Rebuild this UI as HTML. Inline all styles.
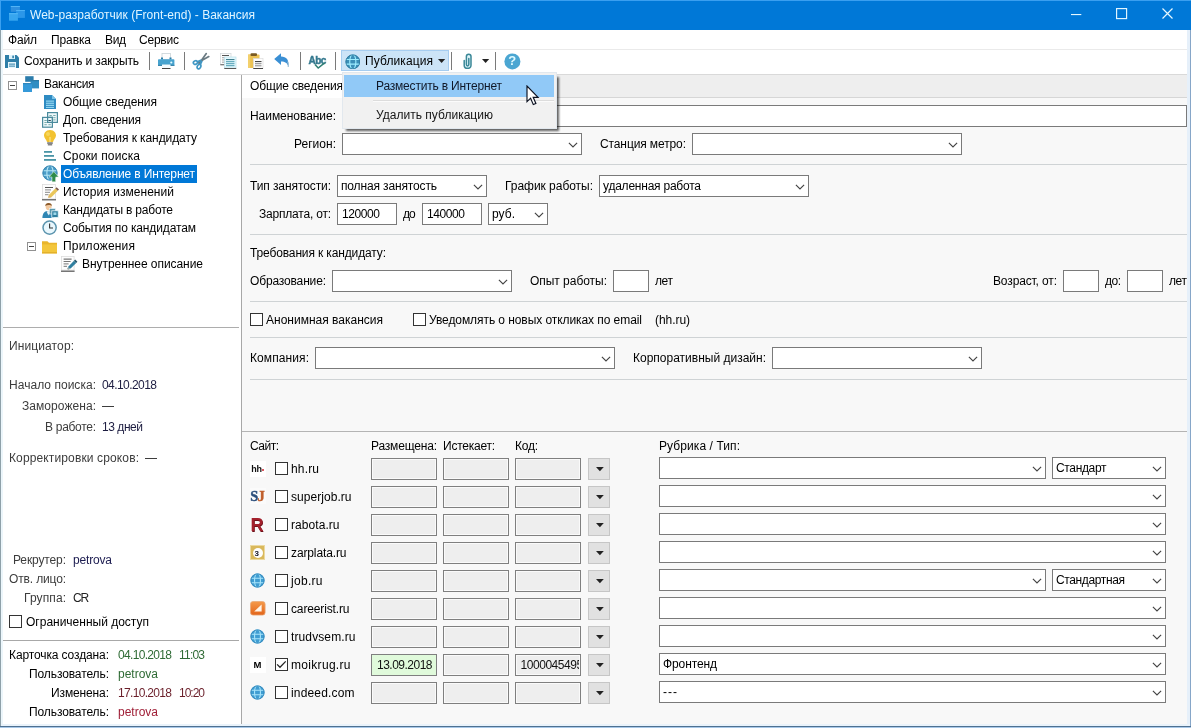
<!DOCTYPE html>
<html><head><meta charset="utf-8"><title>Вакансия</title>
<style>
html,body{margin:0;padding:0;}
body{width:1191px;height:728px;overflow:hidden;background:#fff;font-family:"Liberation Sans", sans-serif;font-size:12px;position:relative;}
#w{position:absolute;left:0;top:0;width:1191px;height:728px;overflow:hidden;opacity:0.9999;}
#w div,#w span.t,#w svg{position:absolute;box-sizing:border-box;}
.t{white-space:nowrap;line-height:16px;height:16px;}
.in{background:#fff;border:1px solid #7a7a7a;}
.dis{background:#eeeeee;border:1px solid #7f7f7f;box-shadow:inset 0 0 0 1px #fafafa;}
.cb{background:#fff;border:1px solid #333;}
.hl{background:#dcdcdc;height:1px;}
</style></head><body><div id="w">
<div class="" style="left:0px;top:0px;width:1191px;height:728px;background:#fff;"></div>
<div class="" style="left:0px;top:0px;width:1191px;height:30px;background:#0078d7;border-top:1px solid #3a9ff0;"></div>
<span id="t0" class="t" style="left:30px;top:7.0px;font-size:12px;color:#e0f5ff;letter-spacing:0.021px;">Web-разработчик (Front-end) - Вакансия</span>
<svg style="left:1071px;top:14px" width="12" height="2" viewBox="0 0 12 2"><rect x="0" y="0" width="10.3" height="1.1" fill="#e6f8ff"/></svg>
<svg style="left:1115.5px;top:8.4px" width="12" height="12" viewBox="0 0 12 12"><rect x="0.6" y="0.6" width="10" height="10" fill="none" stroke="#e6f8ff" stroke-width="1.15"/></svg>
<svg style="left:1161.6px;top:8.4px" width="12" height="12" viewBox="0 0 12 12"><path d="M0.5 0.5 L10.5 10.5 M10.5 0.5 L0.5 10.5" stroke="#e6f8ff" stroke-width="1.2" fill="none"/></svg>
<div class="" style="left:1px;top:30px;width:1189px;height:20px;background:#fff;"></div>
<span id="t1" class="t" style="left:8px;top:32.0px;font-size:12px;color:#000;letter-spacing:-0.172px;">Файл</span>
<span id="t2" class="t" style="left:51px;top:32.0px;font-size:12px;color:#000;letter-spacing:-0.109px;">Правка</span>
<span id="t3" class="t" style="left:105px;top:32.0px;font-size:12px;color:#000;letter-spacing:-0.359px;">Вид</span>
<span id="t4" class="t" style="left:139px;top:32.0px;font-size:12px;color:#000;letter-spacing:-0.219px;">Сервис</span>
<div class="" style="left:1px;top:49px;width:1189px;height:1px;background:#eaeaea;"></div>
<div class="" style="left:1px;top:50px;width:1189px;height:24px;background:#fff;"></div>
<div class="" style="left:1px;top:74px;width:1189px;height:1px;background:#d9d9d9;"></div>
<span id="t5" class="t" style="left:24px;top:53.0px;font-size:12px;color:#000;letter-spacing:-0.138px;">Сохранить и закрыть</span>
<div class="" style="left:149px;top:52px;width:1px;height:18px;background:#7a7a7a;"></div>
<div class="" style="left:184px;top:52px;width:1px;height:18px;background:#7a7a7a;"></div>
<div class="" style="left:300px;top:52px;width:1px;height:18px;background:#7a7a7a;"></div>
<div class="" style="left:335px;top:52px;width:1px;height:18px;background:#7a7a7a;"></div>
<div class="" style="left:451px;top:52px;width:1px;height:18px;background:#7a7a7a;"></div>
<div class="" style="left:495px;top:52px;width:1px;height:18px;background:#7a7a7a;"></div>
<div class="" style="left:341px;top:50px;width:108px;height:21px;background:#cce4f7;border:1px solid #a6cdf0;"></div>
<span id="t6" class="t" style="left:365px;top:53.0px;font-size:12px;color:#000;letter-spacing:0.104px;">Публикация</span>
<svg style="left:438px;top:59px" width="8" height="5" viewBox="0 0 8 5"><path d="M0 0 L7.2 0 L3.6 4.1 Z" fill="#222"/></svg>
<svg style="left:482px;top:59px" width="8" height="5" viewBox="0 0 8 5"><path d="M0 0 L7.2 0 L3.6 4.1 Z" fill="#222"/></svg>
<div class="" style="left:1px;top:75px;width:240px;height:652px;background:#fff;"></div>
<div class="" style="left:241px;top:75px;width:1px;height:652px;background:#a8a8a8;"></div>
<div class="" style="left:8px;top:81px;width:9px;height:9px;background:#fff;border:1px solid #919191;"></div>
<div class="" style="left:10px;top:85px;width:5px;height:1px;background:#444;"></div>
<div class="" style="left:27px;top:242px;width:9px;height:9px;background:#fff;border:1px solid #919191;"></div>
<div class="" style="left:29px;top:246px;width:5px;height:1px;background:#444;"></div>
<span id="t7" class="t" style="left:44px;top:76.0px;font-size:12px;color:#000;letter-spacing:-0.300px;">Вакансия</span>
<div class="" style="left:61px;top:165px;width:136px;height:18px;background:#0078d7;"></div>
<span id="t8" class="t" style="left:63px;top:94.0px;font-size:12px;color:#000;letter-spacing:-0.073px;">Общие сведения</span>
<span id="t9" class="t" style="left:63px;top:112.0px;font-size:12px;color:#000;letter-spacing:-0.189px;">Доп. сведения</span>
<span id="t10" class="t" style="left:63px;top:130.0px;font-size:12px;color:#000;letter-spacing:-0.078px;">Требования к кандидату</span>
<span id="t11" class="t" style="left:63px;top:148.0px;font-size:12px;color:#000;letter-spacing:0.148px;">Сроки поиска</span>
<span id="t12" class="t" style="left:63px;top:166.0px;font-size:12px;color:#fff;letter-spacing:-0.150px;">Объявление в Интернет</span>
<span id="t13" class="t" style="left:63px;top:184.0px;font-size:12px;color:#000;letter-spacing:0.041px;">История изменений</span>
<span id="t14" class="t" style="left:63px;top:202.0px;font-size:12px;color:#000;letter-spacing:-0.191px;">Кандидаты в работе</span>
<span id="t15" class="t" style="left:63px;top:220.0px;font-size:12px;color:#000;letter-spacing:-0.130px;">События по кандидатам</span>
<span id="t16" class="t" style="left:63px;top:238.0px;font-size:12px;color:#000;letter-spacing:0.198px;">Приложения</span>
<span id="t17" class="t" style="left:82px;top:256.0px;font-size:12px;color:#000;letter-spacing:-0.054px;">Внутреннее описание</span>
<div class="" style="left:2px;top:327px;width:237px;height:1px;background:#adadad;"></div>
<div class="" style="left:2px;top:639.5px;width:237px;height:1px;background:#a8a8a8;"></div>
<span id="t18" class="t" style="left:9px;top:338.0px;font-size:12px;color:#3c3c3c;letter-spacing:0.113px;">Инициатор:</span>
<span id="t19" class="t" style="left:9px;top:376.5px;font-size:12px;color:#3c3c3c;letter-spacing:0.035px;">Начало поиска:</span>
<span id="t20" class="t" style="left:102px;top:376.5px;font-size:12px;color:#1c1c40;letter-spacing:-0.562px;">04.10.2018</span>
<span id="t21" class="t" style="left:22px;top:397.5px;font-size:12px;color:#3c3c3c;letter-spacing:0.059px;">Заморожена:</span>
<span id="t22" class="t" style="left:102px;top:397.5px;font-size:12px;color:#222;letter-spacing:0.000px;">—</span>
<span id="t23" class="t" style="left:45px;top:418.5px;font-size:12px;color:#3c3c3c;letter-spacing:-0.293px;">В работе:</span>
<span id="t24" class="t" style="left:102px;top:418.5px;font-size:12px;color:#1c1c40;letter-spacing:-0.448px;">13 дней</span>
<span id="t25" class="t" style="left:9px;top:450.0px;font-size:12px;color:#3c3c3c;letter-spacing:0.130px;">Корректировки сроков:</span>
<span id="t26" class="t" style="left:145px;top:450.0px;font-size:12px;color:#222;letter-spacing:0.000px;">—</span>
<span id="t27" class="t" style="left:13px;top:552.0px;font-size:12px;color:#3c3c3c;letter-spacing:-0.123px;">Рекрутер:</span>
<span id="t28" class="t" style="left:73px;top:552.0px;font-size:12px;color:#1c1c50;letter-spacing:-0.172px;">petrova</span>
<span id="t29" class="t" style="left:9px;top:570.5px;font-size:12px;color:#3c3c3c;letter-spacing:-0.148px;">Отв. лицо:</span>
<span id="t30" class="t" style="left:24px;top:589.5px;font-size:12px;color:#3c3c3c;letter-spacing:0.104px;">Группа:</span>
<span id="t31" class="t" style="left:73px;top:589.5px;font-size:12px;color:#222;letter-spacing:-1.200px;">CR</span>
<div class="cb" style="left:9px;top:615px;width:13px;height:13px;"></div>
<span id="t32" class="t" style="left:26px;top:614.0px;font-size:12px;color:#000;letter-spacing:-0.003px;">Ограниченный доступ</span>
<span id="t33" class="t" style="left:9px;top:646.5px;font-size:12px;color:#000;letter-spacing:-0.115px;">Карточка создана:</span>
<span id="t34" class="t" style="left:118px;top:646.5px;font-size:12px;color:#2f6b35;letter-spacing:-0.674px;">04.10.2018</span>
<span id="t35" class="t" style="left:179px;top:646.5px;font-size:12px;color:#2f6b35;letter-spacing:-0.785px;">11:03</span>
<span id="t36" class="t" style="left:29px;top:665.5px;font-size:12px;color:#000;letter-spacing:-0.102px;">Пользователь:</span>
<span id="t37" class="t" style="left:118px;top:665.5px;font-size:12px;color:#2f6b35;letter-spacing:-0.005px;">petrova</span>
<span id="t38" class="t" style="left:51px;top:684.5px;font-size:12px;color:#000;letter-spacing:-0.125px;">Изменена:</span>
<span id="t39" class="t" style="left:118px;top:684.5px;font-size:12px;color:#6b1f2a;letter-spacing:-0.674px;">17.10.2018</span>
<span id="t40" class="t" style="left:179px;top:684.5px;font-size:12px;color:#6b1f2a;letter-spacing:-1.008px;">10:20</span>
<span id="t41" class="t" style="left:29px;top:703.5px;font-size:12px;color:#000;letter-spacing:-0.102px;">Пользователь:</span>
<span id="t42" class="t" style="left:118px;top:703.5px;font-size:12px;color:#a02038;letter-spacing:-0.005px;">petrova</span>
<div class="" style="left:242px;top:75px;width:945px;height:651px;background:#f8f8f8;"></div>
<div class="" style="left:242px;top:75px;width:945px;height:23px;background:#eeeeee;border-bottom:1px solid #d6d6d6;"></div>
<div class="" style="left:242px;top:75px;width:108px;height:23px;background:#fff;"></div>
<span id="t43" class="t" style="left:250px;top:78.0px;font-size:12px;color:#000;letter-spacing:-0.150px;">Общие сведения</span>
<span id="t44" class="t" style="left:250px;top:108.0px;font-size:12px;color:#000;letter-spacing:-0.044px;">Наименование:</span>
<div class="in" style="left:342px;top:105px;width:845px;height:22px;"></div>
<span id="t45" class="t" style="left:294px;top:136.0px;font-size:12px;color:#000;letter-spacing:0.021px;">Регион:</span>
<div class="in" style="left:342px;top:133px;width:240px;height:22px;"></div>
<svg style="left:568px;top:141.8px" width="10" height="6" viewBox="0 0 10 6"><path d="M0.9 0.8 L5 4.9 L9.1 0.8" fill="none" stroke="#444" stroke-width="1.15"/></svg>
<span id="t46" class="t" style="left:600px;top:136.0px;font-size:12px;color:#000;letter-spacing:-0.112px;">Станция метро:</span>
<div class="in" style="left:692px;top:133px;width:270px;height:22px;"></div>
<svg style="left:948px;top:141.8px" width="10" height="6" viewBox="0 0 10 6"><path d="M0.9 0.8 L5 4.9 L9.1 0.8" fill="none" stroke="#444" stroke-width="1.15"/></svg>
<div class="" style="left:250px;top:164px;width:937px;height:1px;background:#cfd3d5;"></div>
<span id="t47" class="t" style="left:250px;top:178.0px;font-size:12px;color:#000;letter-spacing:-0.094px;">Тип занятости:</span>
<div class="in" style="left:337px;top:175px;width:150px;height:22px;"></div>
<svg style="left:473px;top:183.8px" width="10" height="6" viewBox="0 0 10 6"><path d="M0.9 0.8 L5 4.9 L9.1 0.8" fill="none" stroke="#444" stroke-width="1.15"/></svg>
<span id="t48" class="t" style="left:341px;top:178.0px;font-size:12px;color:#000;letter-spacing:-0.143px;">полная занятость</span>
<span id="t49" class="t" style="left:505px;top:178.0px;font-size:12px;color:#000;letter-spacing:-0.032px;">График работы:</span>
<div class="in" style="left:599px;top:175px;width:210px;height:22px;"></div>
<svg style="left:795px;top:183.8px" width="10" height="6" viewBox="0 0 10 6"><path d="M0.9 0.8 L5 4.9 L9.1 0.8" fill="none" stroke="#444" stroke-width="1.15"/></svg>
<span id="t50" class="t" style="left:603px;top:178.0px;font-size:12px;color:#000;letter-spacing:-0.226px;">удаленная работа</span>
<span id="t51" class="t" style="left:259px;top:206.0px;font-size:12px;color:#000;letter-spacing:-0.204px;">Зарплата, от:</span>
<div class="in" style="left:337px;top:203px;width:60px;height:22px;"></div>
<span id="t52" class="t" style="left:342px;top:206.0px;font-size:12px;color:#000;letter-spacing:-0.409px;">120000</span>
<span id="t53" class="t" style="left:403px;top:206.0px;font-size:12px;color:#000;letter-spacing:-0.988px;">до</span>
<div class="in" style="left:422px;top:203px;width:60px;height:22px;"></div>
<span id="t54" class="t" style="left:427px;top:206.0px;font-size:12px;color:#000;letter-spacing:-0.409px;">140000</span>
<div class="in" style="left:488px;top:203px;width:60px;height:22px;"></div>
<svg style="left:534px;top:211.8px" width="10" height="6" viewBox="0 0 10 6"><path d="M0.9 0.8 L5 4.9 L9.1 0.8" fill="none" stroke="#444" stroke-width="1.15"/></svg>
<span id="t55" class="t" style="left:492px;top:206.0px;font-size:12px;color:#000;letter-spacing:0.036px;">руб.</span>
<div class="" style="left:250px;top:234px;width:937px;height:1px;background:#cfd3d5;"></div>
<span id="t56" class="t" style="left:250px;top:245.0px;font-size:12px;color:#000;letter-spacing:-0.136px;">Требования к кандидату:</span>
<span id="t57" class="t" style="left:250px;top:273.0px;font-size:12px;color:#000;letter-spacing:-0.156px;">Образование:</span>
<div class="in" style="left:332px;top:270px;width:180px;height:22px;"></div>
<svg style="left:498px;top:278.8px" width="10" height="6" viewBox="0 0 10 6"><path d="M0.9 0.8 L5 4.9 L9.1 0.8" fill="none" stroke="#444" stroke-width="1.15"/></svg>
<span id="t58" class="t" style="left:530px;top:273.0px;font-size:12px;color:#000;letter-spacing:-0.034px;">Опыт работы:</span>
<div class="in" style="left:613px;top:270px;width:36px;height:22px;"></div>
<span id="t59" class="t" style="left:655px;top:273.0px;font-size:12px;color:#000;letter-spacing:-0.391px;">лет</span>
<span id="t60" class="t" style="left:993px;top:273.0px;font-size:12px;color:#000;letter-spacing:-0.134px;">Возраст, от:</span>
<div class="in" style="left:1063px;top:270px;width:36px;height:22px;"></div>
<span id="t61" class="t" style="left:1105px;top:273.0px;font-size:12px;color:#000;letter-spacing:-0.508px;">до:</span>
<div class="in" style="left:1127px;top:270px;width:36px;height:22px;"></div>
<span id="t62" class="t" style="left:1169px;top:273.0px;font-size:12px;color:#000;letter-spacing:-0.391px;">лет</span>
<div class="" style="left:250px;top:301px;width:937px;height:1px;background:#cfd3d5;"></div>
<div class="cb" style="left:250px;top:313px;width:13px;height:13px;"></div>
<span id="t63" class="t" style="left:266px;top:312.0px;font-size:12px;color:#000;letter-spacing:0.003px;">Анонимная вакансия</span>
<div class="cb" style="left:413px;top:313px;width:13px;height:13px;"></div>
<span id="t64" class="t" style="left:429px;top:312.0px;font-size:12px;color:#000;letter-spacing:-0.070px;">Уведомлять о новых откликах по email</span>
<span id="t65" class="t" style="left:655px;top:312.0px;font-size:12px;color:#000;letter-spacing:-0.057px;">(hh.ru)</span>
<div class="" style="left:250px;top:337px;width:937px;height:1px;background:#cfd3d5;"></div>
<span id="t66" class="t" style="left:250px;top:350.0px;font-size:12px;color:#000;letter-spacing:0.094px;">Компания:</span>
<div class="in" style="left:315px;top:347px;width:300px;height:22px;"></div>
<svg style="left:601px;top:355.8px" width="10" height="6" viewBox="0 0 10 6"><path d="M0.9 0.8 L5 4.9 L9.1 0.8" fill="none" stroke="#444" stroke-width="1.15"/></svg>
<span id="t67" class="t" style="left:633px;top:350.0px;font-size:12px;color:#000;letter-spacing:-0.001px;">Корпоративный дизайн:</span>
<div class="in" style="left:772px;top:347px;width:210px;height:22px;"></div>
<svg style="left:968px;top:355.8px" width="10" height="6" viewBox="0 0 10 6"><path d="M0.9 0.8 L5 4.9 L9.1 0.8" fill="none" stroke="#444" stroke-width="1.15"/></svg>
<div class="" style="left:250px;top:379px;width:937px;height:1px;background:#cfd3d5;"></div>
<div class="" style="left:242px;top:431px;width:945px;height:1px;background:#b4b4b4;"></div>
<span id="t68" class="t" style="left:250px;top:438.0px;font-size:12px;color:#000;letter-spacing:-0.504px;">Сайт:</span>
<span id="t69" class="t" style="left:371px;top:438.0px;font-size:12px;color:#000;letter-spacing:-0.181px;">Размещена:</span>
<span id="t70" class="t" style="left:443px;top:438.0px;font-size:12px;color:#000;letter-spacing:-0.244px;">Истекает:</span>
<span id="t71" class="t" style="left:515px;top:438.0px;font-size:12px;color:#000;letter-spacing:-0.250px;">Код:</span>
<span id="t72" class="t" style="left:659px;top:438.0px;font-size:12px;color:#000;letter-spacing:0.083px;">Рубрика / Тип:</span>
<div class="cb" style="left:275px;top:462px;width:13px;height:13px;"></div>
<span id="t73" class="t" style="left:291px;top:461.0px;font-size:12px;color:#000;letter-spacing:0.160px;">hh.ru</span>
<div class="dis" style="left:371px;top:458px;width:66px;height:22px;"></div>
<div class="dis" style="left:443px;top:458px;width:66px;height:22px;"></div>
<div class="dis" style="left:515px;top:458px;width:66px;height:22px;"></div>
<div class="" style="left:588px;top:458px;width:22px;height:22px;background:#e1e1e1;border:1px solid #c6c6c6;"></div>
<svg style="left:595.5px;top:467px" width="8" height="5" viewBox="0 0 8 5"><path d="M0 0 L7.8 0 L3.9 4.3 Z" fill="#222"/></svg>
<div class="in" style="left:659px;top:457px;width:387px;height:22px;"></div>
<svg style="left:1032px;top:465.8px" width="10" height="6" viewBox="0 0 10 6"><path d="M0.9 0.8 L5 4.9 L9.1 0.8" fill="none" stroke="#444" stroke-width="1.15"/></svg>
<div class="in" style="left:1052px;top:457px;width:114px;height:22px;"></div>
<svg style="left:1152px;top:465.8px" width="10" height="6" viewBox="0 0 10 6"><path d="M0.9 0.8 L5 4.9 L9.1 0.8" fill="none" stroke="#444" stroke-width="1.15"/></svg>
<span id="t74" class="t" style="left:1056px;top:460.0px;font-size:12px;color:#000;letter-spacing:-0.346px;">Стандарт</span>
<div class="cb" style="left:275px;top:490px;width:13px;height:13px;"></div>
<span id="t75" class="t" style="left:291px;top:489.0px;font-size:12px;color:#000;letter-spacing:0.045px;">superjob.ru</span>
<div class="dis" style="left:371px;top:486px;width:66px;height:22px;"></div>
<div class="dis" style="left:443px;top:486px;width:66px;height:22px;"></div>
<div class="dis" style="left:515px;top:486px;width:66px;height:22px;"></div>
<div class="" style="left:588px;top:486px;width:22px;height:22px;background:#e1e1e1;border:1px solid #c6c6c6;"></div>
<svg style="left:595.5px;top:495px" width="8" height="5" viewBox="0 0 8 5"><path d="M0 0 L7.8 0 L3.9 4.3 Z" fill="#222"/></svg>
<div class="in" style="left:659px;top:485px;width:507px;height:22px;"></div>
<svg style="left:1152px;top:493.8px" width="10" height="6" viewBox="0 0 10 6"><path d="M0.9 0.8 L5 4.9 L9.1 0.8" fill="none" stroke="#444" stroke-width="1.15"/></svg>
<div class="cb" style="left:275px;top:518px;width:13px;height:13px;"></div>
<span id="t76" class="t" style="left:291px;top:517.0px;font-size:12px;color:#000;letter-spacing:0.059px;">rabota.ru</span>
<div class="dis" style="left:371px;top:514px;width:66px;height:22px;"></div>
<div class="dis" style="left:443px;top:514px;width:66px;height:22px;"></div>
<div class="dis" style="left:515px;top:514px;width:66px;height:22px;"></div>
<div class="" style="left:588px;top:514px;width:22px;height:22px;background:#e1e1e1;border:1px solid #c6c6c6;"></div>
<svg style="left:595.5px;top:523px" width="8" height="5" viewBox="0 0 8 5"><path d="M0 0 L7.8 0 L3.9 4.3 Z" fill="#222"/></svg>
<div class="in" style="left:659px;top:513px;width:507px;height:22px;"></div>
<svg style="left:1152px;top:521.8px" width="10" height="6" viewBox="0 0 10 6"><path d="M0.9 0.8 L5 4.9 L9.1 0.8" fill="none" stroke="#444" stroke-width="1.15"/></svg>
<div class="cb" style="left:275px;top:546px;width:13px;height:13px;"></div>
<span id="t77" class="t" style="left:291px;top:545.0px;font-size:12px;color:#000;letter-spacing:-0.120px;">zarplata.ru</span>
<div class="dis" style="left:371px;top:542px;width:66px;height:22px;"></div>
<div class="dis" style="left:443px;top:542px;width:66px;height:22px;"></div>
<div class="dis" style="left:515px;top:542px;width:66px;height:22px;"></div>
<div class="" style="left:588px;top:542px;width:22px;height:22px;background:#e1e1e1;border:1px solid #c6c6c6;"></div>
<svg style="left:595.5px;top:551px" width="8" height="5" viewBox="0 0 8 5"><path d="M0 0 L7.8 0 L3.9 4.3 Z" fill="#222"/></svg>
<div class="in" style="left:659px;top:541px;width:507px;height:22px;"></div>
<svg style="left:1152px;top:549.8px" width="10" height="6" viewBox="0 0 10 6"><path d="M0.9 0.8 L5 4.9 L9.1 0.8" fill="none" stroke="#444" stroke-width="1.15"/></svg>
<div class="cb" style="left:275px;top:574px;width:13px;height:13px;"></div>
<span id="t78" class="t" style="left:291px;top:573.0px;font-size:12px;color:#000;letter-spacing:0.294px;">job.ru</span>
<div class="dis" style="left:371px;top:570px;width:66px;height:22px;"></div>
<div class="dis" style="left:443px;top:570px;width:66px;height:22px;"></div>
<div class="dis" style="left:515px;top:570px;width:66px;height:22px;"></div>
<div class="" style="left:588px;top:570px;width:22px;height:22px;background:#e1e1e1;border:1px solid #c6c6c6;"></div>
<svg style="left:595.5px;top:579px" width="8" height="5" viewBox="0 0 8 5"><path d="M0 0 L7.8 0 L3.9 4.3 Z" fill="#222"/></svg>
<div class="in" style="left:659px;top:569px;width:387px;height:22px;"></div>
<svg style="left:1032px;top:577.8px" width="10" height="6" viewBox="0 0 10 6"><path d="M0.9 0.8 L5 4.9 L9.1 0.8" fill="none" stroke="#444" stroke-width="1.15"/></svg>
<div class="in" style="left:1052px;top:569px;width:114px;height:22px;"></div>
<svg style="left:1152px;top:577.8px" width="10" height="6" viewBox="0 0 10 6"><path d="M0.9 0.8 L5 4.9 L9.1 0.8" fill="none" stroke="#444" stroke-width="1.15"/></svg>
<span id="t79" class="t" style="left:1056px;top:572.0px;font-size:12px;color:#000;letter-spacing:-0.372px;">Стандартная</span>
<div class="cb" style="left:275px;top:602px;width:13px;height:13px;"></div>
<span id="t80" class="t" style="left:291px;top:601.0px;font-size:12px;color:#000;letter-spacing:-0.139px;">careerist.ru</span>
<div class="dis" style="left:371px;top:598px;width:66px;height:22px;"></div>
<div class="dis" style="left:443px;top:598px;width:66px;height:22px;"></div>
<div class="dis" style="left:515px;top:598px;width:66px;height:22px;"></div>
<div class="" style="left:588px;top:598px;width:22px;height:22px;background:#e1e1e1;border:1px solid #c6c6c6;"></div>
<svg style="left:595.5px;top:607px" width="8" height="5" viewBox="0 0 8 5"><path d="M0 0 L7.8 0 L3.9 4.3 Z" fill="#222"/></svg>
<div class="in" style="left:659px;top:597px;width:507px;height:22px;"></div>
<svg style="left:1152px;top:605.8px" width="10" height="6" viewBox="0 0 10 6"><path d="M0.9 0.8 L5 4.9 L9.1 0.8" fill="none" stroke="#444" stroke-width="1.15"/></svg>
<div class="cb" style="left:275px;top:630px;width:13px;height:13px;"></div>
<span id="t81" class="t" style="left:291px;top:629.0px;font-size:12px;color:#000;letter-spacing:0.114px;">trudvsem.ru</span>
<div class="dis" style="left:371px;top:626px;width:66px;height:22px;"></div>
<div class="dis" style="left:443px;top:626px;width:66px;height:22px;"></div>
<div class="dis" style="left:515px;top:626px;width:66px;height:22px;"></div>
<div class="" style="left:588px;top:626px;width:22px;height:22px;background:#e1e1e1;border:1px solid #c6c6c6;"></div>
<svg style="left:595.5px;top:635px" width="8" height="5" viewBox="0 0 8 5"><path d="M0 0 L7.8 0 L3.9 4.3 Z" fill="#222"/></svg>
<div class="in" style="left:659px;top:625px;width:507px;height:22px;"></div>
<svg style="left:1152px;top:633.8px" width="10" height="6" viewBox="0 0 10 6"><path d="M0.9 0.8 L5 4.9 L9.1 0.8" fill="none" stroke="#444" stroke-width="1.15"/></svg>
<div class="cb" style="left:275px;top:658px;width:13px;height:13px;"></div>
<svg style="left:275px;top:658px" width="13" height="13" viewBox="0 0 13 13"><path d="M2.1 6.4 L5 9.3 L10.7 3.4" fill="none" stroke="#222" stroke-width="1.25"/></svg>
<span id="t82" class="t" style="left:291px;top:657.0px;font-size:12px;color:#000;letter-spacing:0.312px;">moikrug.ru</span>
<div class="dis" style="left:371px;top:654px;width:66px;height:22px;background:#e0fadb;box-shadow:none;"></div>
<span id="t83" class="t" style="left:377px;top:656.5px;font-size:12px;color:#111;letter-spacing:-0.507px;">13.09.2018</span>
<div class="dis" style="left:443px;top:654px;width:66px;height:22px;"></div>
<div class="dis" style="left:515px;top:654px;width:66px;height:22px;"></div>
<div class="" style="left:517px;top:655px;width:61.5px;height:20px;overflow:hidden;"><span class="t" style="left:3.6px;top:1.5px;letter-spacing:-0.47px;color:#111;">1000045495</span></div>
<div class="" style="left:588px;top:654px;width:22px;height:22px;background:#e1e1e1;border:1px solid #c6c6c6;"></div>
<svg style="left:595.5px;top:663px" width="8" height="5" viewBox="0 0 8 5"><path d="M0 0 L7.8 0 L3.9 4.3 Z" fill="#222"/></svg>
<div class="in" style="left:659px;top:653px;width:507px;height:22px;"></div>
<svg style="left:1152px;top:661.8px" width="10" height="6" viewBox="0 0 10 6"><path d="M0.9 0.8 L5 4.9 L9.1 0.8" fill="none" stroke="#444" stroke-width="1.15"/></svg>
<span id="t84" class="t" style="left:663px;top:656.0px;font-size:12px;color:#000;letter-spacing:-0.109px;">Фронтенд</span>
<div class="cb" style="left:275px;top:686px;width:13px;height:13px;"></div>
<span id="t85" class="t" style="left:291px;top:685.0px;font-size:12px;color:#000;letter-spacing:0.161px;">indeed.com</span>
<div class="dis" style="left:371px;top:682px;width:66px;height:22px;"></div>
<div class="dis" style="left:443px;top:682px;width:66px;height:22px;"></div>
<div class="dis" style="left:515px;top:682px;width:66px;height:22px;"></div>
<div class="" style="left:588px;top:682px;width:22px;height:22px;background:#e1e1e1;border:1px solid #c6c6c6;"></div>
<svg style="left:595.5px;top:691px" width="8" height="5" viewBox="0 0 8 5"><path d="M0 0 L7.8 0 L3.9 4.3 Z" fill="#222"/></svg>
<div class="in" style="left:659px;top:681px;width:507px;height:22px;"></div>
<svg style="left:1152px;top:689.8px" width="10" height="6" viewBox="0 0 10 6"><path d="M0.9 0.8 L5 4.9 L9.1 0.8" fill="none" stroke="#444" stroke-width="1.15"/></svg>
<span id="t86" class="t" style="left:663px;top:684.0px;font-size:12px;color:#000;letter-spacing:1.000px;">---</span>
<div class="" style="left:1px;top:30px;width:2px;height:696px;background:#ecf6fb;"></div>
<div class="" style="left:0px;top:30px;width:1px;height:698px;background:#8fa1a9;"></div>
<div class="" style="left:0px;top:0px;width:1px;height:30px;background:#3aa0f0;"></div>
<div class="" style="left:1187px;top:30px;width:3px;height:696px;background:#e6f0fa;"></div>
<div class="" style="left:1px;top:724px;width:1189px;height:2px;background:#eaf3fb;"></div>
<div class="" style="left:1190px;top:30px;width:1px;height:698px;background:#86a6c8;"></div>
<div class="" style="left:0px;top:726px;width:1191px;height:1px;background:#4f7191;"></div>
<div class="" style="left:0px;top:727px;width:1191px;height:1px;background:#a8c8e8;"></div>
<div class="" style="left:346px;top:77px;width:213px;height:54px;background:rgba(0,0,0,0.62);filter:blur(0.9px);"></div>
<div class="" style="left:342px;top:72px;width:215px;height:57px;background:#f1f1f1;border:1px solid #e2e8ee;"></div>
<div class="" style="left:344px;top:75px;width:210px;height:22px;background:#91c9f7;"></div>
<span id="t87" class="t" style="left:376px;top:78.0px;font-size:12px;color:#101828;letter-spacing:-0.196px;">Разместить в Интернет</span>
<div class="" style="left:373px;top:100px;width:181px;height:1px;background:#dcdcdc;"></div>
<div class="" style="left:373px;top:101px;width:181px;height:1px;background:#fbfbfb;"></div>
<span id="t88" class="t" style="left:376px;top:107.0px;font-size:12px;color:#151515;letter-spacing:0.024px;">Удалить публикацию</span>
<svg style="left:525.6px;top:85px" width="14" height="22" viewBox="0 0 14 22"><path d="M1 1 L1 16.6 L4.6 13.2 L7.3 19.6 L9.9 18.5 L7.2 12.3 L12.1 12.3 Z" fill="#fff" stroke="#0a1020" stroke-width="1.15" stroke-linejoin="miter"/></svg>
<svg style="left:8px;top:5px" width="18" height="17" viewBox="0 0 18 17"><rect x="2.8" y="1" width="9.1" height="5.8" fill="#2d8fe0"/><rect x="2.8" y="1" width="9.1" height="1" fill="#52b4f6"/><rect x="8.1" y="5" width="8.8" height="7.9" fill="#2b97e9"/><rect x="8.1" y="5" width="8.8" height="1" fill="#4db2f6"/><rect x="1" y="8.2" width="8.9" height="7.5" fill="#37a6ef"/><rect x="1" y="8.2" width="8.9" height="1" fill="#55b8f7"/></svg>
<svg style="left:5px;top:55px" width="14" height="13" viewBox="0 0 14 13"><path d="M0 0 H11.5 L14 2.5 V13 H0 Z" fill="#2f7fa8"/><rect x="4" y="0" width="6" height="4" fill="#dff3fb"/><rect x="7.3" y="0.6" width="1.6" height="2.6" fill="#2f7fa8"/><rect x="3" y="7" width="8" height="6" fill="#e6f7fd"/><rect x="4" y="8.6" width="6" height="1" fill="#2f7fa8"/><rect x="4" y="10.6" width="6" height="1" fill="#2f7fa8"/></svg>
<svg style="left:158px;top:53px" width="17" height="16" viewBox="0 0 17 16"><rect x="4" y="0.5" width="8.5" height="6" fill="#fdfdfd" stroke="#c9d3d8" stroke-width="0.8"/><rect x="3" y="4.5" width="2" height="2" fill="#2f7ea6"/><rect x="11.5" y="4.5" width="2" height="2" fill="#2f7ea6"/><rect x="0" y="6.3" width="16.4" height="6.7" rx="0.8" fill="#47a3cf"/><rect x="0" y="11.8" width="16.4" height="1.2" fill="#3a86ad"/><circle cx="13.3" cy="9.5" r="1.1" fill="#e6fbff"/><rect x="4" y="11.5" width="8.5" height="4" fill="#f4fbfe"/><rect x="4" y="15" width="8.5" height="1" fill="#444"/></svg>
<svg style="left:192px;top:52px" width="18" height="18" viewBox="0 0 18 18"><path d="M14.3 1.6 L7.2 11.6 M16.8 4.6 L6.2 10.6" stroke="#6a7a82" stroke-width="1.7" fill="none" stroke-linecap="round"/><ellipse cx="3.4" cy="10.6" rx="2.1" ry="1.7" fill="none" stroke="#3f97c4" stroke-width="1.7" transform="rotate(-25 3.4 10.6)"/><ellipse cx="7" cy="14.6" rx="1.7" ry="2.3" fill="none" stroke="#3f97c4" stroke-width="1.7" transform="rotate(28 7 14.6)"/><path d="M5.2 9.8 L9.4 8.2 M8.2 12.6 L10 8.8" stroke="#3f97c4" stroke-width="1.8" fill="none"/></svg>
<svg style="left:220px;top:53px" width="17" height="16" viewBox="0 0 17 16"><rect x="0.5" y="0.5" width="10.5" height="11" fill="#fdfdfd" stroke="#d5dadd" stroke-width="0.8"/><rect x="2" y="2" width="7" height="1" fill="#555"/><rect x="2" y="4.3" width="3" height="0.9" fill="#999"/><rect x="2" y="6.5" width="3" height="0.9" fill="#999"/><rect x="2" y="8.7" width="3" height="0.9" fill="#999"/><rect x="0.3" y="11.2" width="4" height="1.1" fill="#666"/><rect x="4.5" y="4" width="11.5" height="11" fill="#e3f8fd" stroke="#b8dfe8" stroke-width="0.7"/><rect x="6" y="6" width="8.5" height="1.1" fill="#3f7f8f"/><rect x="6" y="8.2" width="8.5" height="1" fill="#4a9bb0"/><rect x="6" y="10.2" width="8.5" height="1" fill="#4a9bb0"/><rect x="6" y="12.2" width="8.5" height="1" fill="#4a9bb0"/><rect x="4.3" y="15" width="11.9" height="1" fill="#555"/></svg>
<svg style="left:248px;top:53px" width="16" height="16" viewBox="0 0 16 16"><rect x="0" y="1.5" width="11.5" height="13.5" rx="0.8" fill="#ecc254"/><rect x="0" y="1.5" width="2.2" height="13.5" fill="#f3d06c"/><rect x="2.5" y="0.3" width="6.5" height="2.8" rx="1" fill="#7a5a22"/><rect x="5.3" y="5.5" width="9.7" height="10" fill="#fdfdfd" stroke="#d8d8d8" stroke-width="0.6"/><rect x="7" y="8" width="6.5" height="1.1" fill="#444"/><rect x="7" y="10.2" width="6.5" height="1" fill="#888"/><rect x="7" y="12.3" width="6.5" height="1" fill="#888"/><rect x="5.3" y="15" width="9.7" height="1" fill="#444"/></svg>
<svg style="left:273px;top:52px" width="18" height="17" viewBox="0 0 18 17"><path d="M1.2 7 L8 1.2 V4.6 C13.5 4.6 16.3 8 15.3 14.6 C14.3 11 12.2 9.6 8 9.6 V13 Z" fill="#3a8fd4"/><path d="M14.4 9.5 C15.2 11.5 15.4 13 15.2 15" stroke="#8fb5cf" stroke-width="1" fill="none"/></svg>
<span class="t" style="left:308.5px;top:52.5px;font-size:10px;font-weight:bold;color:#35798f;letter-spacing:-0.5px;-webkit-text-stroke:0.45px #35798f;">Abc</span>
<svg style="left:314px;top:62px" width="12" height="8" viewBox="0 0 12 8"><path d="M1 2.6 L4.2 6 L10.6 0.8" fill="none" stroke="#2f7f74" stroke-width="1.5"/></svg>
<svg style="left:344.7px;top:53.7px" width="15.6" height="15.6" viewBox="0 0 15.6 15.6"><defs><clipPath id="gc352_61"><circle cx="7.8" cy="7.8" r="7.3"/></clipPath></defs><circle cx="7.8" cy="7.8" r="7.3" fill="#3b8fb8"/><g clip-path="url(#gc352_61)" fill="none" stroke="#9eeeff" stroke-width="1.1"><ellipse cx="7.8" cy="7.8" rx="3.066" ry="7.3"/><path d="M0 5.5 H15.6 M0 10.1 H15.6"/></g><circle cx="7.8" cy="7.8" r="6.8999999999999995" fill="none" stroke="#2f7c9f" stroke-width="0.9"/></svg>
<svg style="left:462px;top:53px" width="12" height="17" viewBox="0 0 12 17"><path d="M2.2 7.5 V12.2 C2.2 16.4 9 16.4 9 12.2 V3.6 C9 0.4 4.4 0.4 4.4 3.6 V11.6 C4.4 13.4 6.8 13.4 6.8 11.6 V5.5" fill="#dff6fb" stroke="#3a8797" stroke-width="1.5" stroke-linecap="round"/></svg>
<svg style="left:503.5px;top:52.7px" width="17" height="17" viewBox="0 0 17 17"><circle cx="8.4" cy="8.4" r="8" fill="#4ba6d2"/></svg>
<span class="t" style="left:508.2px;top:53.2px;font-size:13px;font-weight:bold;color:#dffaff;">?</span>
<svg style="left:23px;top:76px" width="16" height="16" viewBox="0 0 16 16"><rect x="2.2" y="0.2" width="8.4" height="5.6" fill="#2c7cab"/><rect x="7.6" y="4" width="8.4" height="8.4" fill="#2f8dc2"/><rect x="7.6" y="4" width="8.4" height="1.2" fill="#2b7aa6"/><rect x="0" y="7" width="9" height="9" fill="#3599d8"/><rect x="0" y="7" width="9" height="1.2" fill="#2f87bd"/></svg>
<svg style="left:44px;top:95px" width="12" height="14" viewBox="0 0 12 14"><path d="M0 0 H8 L12 4 V14 H0 Z" fill="#2f8bc2"/><path d="M8 0 L12 4 H8 Z" fill="#7cc3e8"/><rect x="2" y="5.6" width="8" height="1" fill="#a8e6fb"/><rect x="2" y="7.7" width="8" height="1" fill="#a8e6fb"/><rect x="2" y="9.8" width="8" height="1" fill="#a8e6fb"/><rect x="2" y="11.9" width="8" height="0.9" fill="#a8e6fb"/></svg>
<svg style="left:42px;top:112px" width="16" height="16" viewBox="0 0 16 16"><rect x="5.6" y="0.6" width="9.8" height="9.8" fill="#eef8fb" stroke="#4a8a9c" stroke-width="1.2"/><rect x="7.4" y="3" width="2.4" height="1" fill="#7aa"/><rect x="11.2" y="3" width="2.4" height="1" fill="#7aa"/><rect x="11.2" y="5.2" width="2.4" height="1" fill="#7aa"/><rect x="11.2" y="7.4" width="2.4" height="1" fill="#7aa"/><rect x="0.6" y="5.4" width="9.8" height="9.8" fill="#eef8fb" stroke="#4a8a9c" stroke-width="1.2"/><rect x="2.4" y="8" width="2.4" height="1" fill="#7aa"/><rect x="6.4" y="8" width="2.4" height="1" fill="#245"/><rect x="2.4" y="10" width="2.4" height="1" fill="#7aa"/><rect x="2.4" y="12.2" width="2.4" height="1" fill="#7aa"/><rect x="6.4" y="12.2" width="2.4" height="1" fill="#7aa"/><rect x="5.6" y="5.4" width="4.8" height="5" fill="none" stroke="#4a8a9c" stroke-width="1.2"/></svg>
<svg style="left:43px;top:129px" width="14" height="18" viewBox="0 0 14 18"><path d="M7 1 C2.6 1 1 4.2 1 6.6 C1 9.4 3.4 10.6 4 13 H10 C10.6 10.6 13 9.4 13 6.6 C13 4.2 11.4 1 7 1 Z" fill="#f2c230"/><path d="M7 8 V13" stroke="#fbe58a" stroke-width="1.2"/><circle cx="5" cy="5" r="2" fill="#f7d65a"/><rect x="4.2" y="13.4" width="5.6" height="1.3" fill="#555"/><rect x="4.8" y="15.2" width="4.4" height="1.2" fill="#666"/></svg>
<svg style="left:44px;top:151px" width="12" height="10" viewBox="0 0 12 10"><rect x="0" y="0" width="8" height="1.8" fill="#4a94a6"/><rect x="0" y="4" width="10" height="1.8" fill="#4a94a6"/><rect x="0" y="8" width="12" height="1.8" fill="#4a94a6"/></svg>
<svg style="left:41.5px;top:165.3px" width="16.0" height="16.0" viewBox="0 0 16.0 16.0"><defs><clipPath id="gc49_173"><circle cx="8.0" cy="8.0" r="7.5"/></clipPath></defs><circle cx="8.0" cy="8.0" r="7.5" fill="#4a9bc6"/><g clip-path="url(#gc49_173)" fill="none" stroke="#b4e6f6" stroke-width="1.1"><ellipse cx="8.0" cy="8.0" rx="3.15" ry="7.5"/><path d="M0 5.7 H16.0 M0 10.3 H16.0"/></g><circle cx="8.0" cy="8.0" r="7.1" fill="none" stroke="#3a86b0" stroke-width="0.9"/></svg>
<svg style="left:49px;top:171px" width="10" height="12" viewBox="0 0 10 12"><path d="M4.8 0.6 L9.6 6 H6.6 V10.8 H3 V6 H0 Z" fill="#2e8b4a" stroke="#e8f4ea" stroke-width="0.5"/></svg>
<svg style="left:42px;top:184px" width="17" height="17" viewBox="0 0 17 17"><rect x="0.5" y="0.5" width="13" height="14.5" fill="#fdfdfd" stroke="#dcdcdc" stroke-width="0.8"/><rect x="3" y="3" width="8" height="1" fill="#555"/><rect x="3" y="5.4" width="6" height="1" fill="#8a8a8a"/><rect x="3" y="7.8" width="5" height="1" fill="#8a8a8a"/><rect x="3" y="10.2" width="3.5" height="1" fill="#8a8a8a"/><rect x="0" y="15.2" width="14" height="1.2" fill="#555"/><path d="M6.2 13.8 L7 10.8 L13.4 4.4 L15.8 6.8 L9.4 13.2 Z" fill="#e9c65a"/><path d="M13.4 4.4 L14.6 3.2 L17 5.6 L15.8 6.8 Z" fill="#7a5548"/><path d="M6.2 13.8 L7 10.8 L9.4 13.2 Z" fill="#d8b070"/></svg>
<svg style="left:42px;top:202px" width="17" height="16" viewBox="0 0 17 16"><path d="M0.4 16 C0.4 10.6 3 9 6.4 9 C9.8 9 12.2 10.6 12.2 16 Z" fill="#2f86b4"/><path d="M6.4 9 L4.6 9.6 L6.4 13.4 L8.2 9.6 Z" fill="#e8f2f6"/><ellipse cx="6.6" cy="4.6" rx="3" ry="3.6" fill="#f2c9a0"/><path d="M3.2 4 C3 0.2 10 0 10 4 C8.6 2.8 5 2.8 3.2 4 Z" fill="#8a5a2a"/><rect x="7.4" y="6.6" width="6" height="5.4" fill="#5a98ac" stroke="#e8f6fa" stroke-width="0.6"/><rect x="9.8" y="8.8" width="6.4" height="6.6" fill="#2f7f9f" stroke="#e8f6fa" stroke-width="0.8"/><rect x="11.4" y="10.4" width="3" height="2.6" fill="#9ed8ea"/></svg>
<svg style="left:42px;top:220px" width="16" height="16" viewBox="0 0 16 16"><circle cx="7.6" cy="7.6" r="6.6" fill="#e9f7fd" stroke="#5b94ae" stroke-width="1.5"/><path d="M7.6 3.6 V8 H11" fill="none" stroke="#333" stroke-width="1.1"/></svg>
<svg style="left:42px;top:239.5px" width="15" height="14" viewBox="0 0 15 14"><path d="M0 1.2 H5.4 L7 2.8 H15 V13.3 H0 Z" fill="#e9b52c"/><rect x="0" y="4.4" width="15" height="8.9" fill="#f3c63c"/><rect x="0" y="12.3" width="15" height="1" fill="#dca824"/></svg>
<svg style="left:61px;top:256px" width="17" height="16" viewBox="0 0 17 16"><rect x="0.5" y="0.5" width="12.6" height="13.6" fill="#fdfdfd" stroke="#dcdcdc" stroke-width="0.8"/><rect x="2.6" y="2.6" width="8" height="1" fill="#555"/><rect x="2.6" y="5" width="7" height="1" fill="#777"/><rect x="2.6" y="7.4" width="5" height="1" fill="#777"/><rect x="2.6" y="9.8" width="3.4" height="1" fill="#777"/><rect x="0" y="14.6" width="13.6" height="1.2" fill="#555"/><path d="M7 12.8 L7.4 10.4 L13 4.8 L15.2 7 L9.6 12.6 Z" fill="#2f7fa0"/><path d="M13 4.8 L14.2 3.6 L16.4 5.8 L15.2 7 Z" fill="#24566a"/><circle cx="7.4" cy="12.6" r="1.2" fill="#9aa"/></svg>
<div class="" style="left:250px;top:461px;width:16px;height:16px;background:#fff;"></div>
<span class="t" style="left:251.3px;top:460.5px;font-size:9px;font-weight:bold;color:#111;letter-spacing:-0.3px;">hh</span>
<div class="" style="left:261.6px;top:469.4px;width:2px;height:2px;background:#d0202a;border-radius:1px;"></div>
<div class="" style="left:250px;top:488px;width:16px;height:16px;background:#fbfbfb;"></div>
<span class="t" style="left:250.3px;top:488px;font-size:14.5px;font-weight:bold;color:#2c4f7c;-webkit-text-stroke:0.4px #2c4f7c;font-family:'Liberation Serif',serif;">S</span>
<span class="t" style="left:257.6px;top:488px;font-size:14.5px;font-weight:bold;color:#c05f2c;-webkit-text-stroke:0.4px #c05f2c;font-family:'Liberation Serif',serif;">J</span>
<span class="t" style="left:250.4px;top:517px;font-size:18px;font-weight:bold;color:#a3202c;letter-spacing:0;text-shadow:0.6px 0.6px 0 #6a1018;">R</span>
<div class="" style="left:250px;top:545px;width:15px;height:15px;background:#d9b85c;border:1px solid #ecd9a0;"></div>
<div class="" style="left:252.5px;top:547.5px;width:10px;height:10px;background:#fdfdfd;border-radius:5px;"></div>
<span class="t" style="left:254.6px;top:544.6px;font-size:9px;font-weight:bold;color:#223;">з</span>
<svg style="left:249.5px;top:572.5px" width="15" height="15" viewBox="0 0 15 15"><defs><clipPath id="gc257_580"><circle cx="7.5" cy="7.5" r="7"/></clipPath></defs><circle cx="7.5" cy="7.5" r="7" fill="#3f9dd2"/><g clip-path="url(#gc257_580)" fill="none" stroke="#a8e4fa" stroke-width="1.1"><ellipse cx="7.5" cy="7.5" rx="2.94" ry="7"/><path d="M0 5.2 H15 M0 9.8 H15"/></g><circle cx="7.5" cy="7.5" r="6.6" fill="none" stroke="#3388bb" stroke-width="0.9"/></svg>
<svg style="left:249.5px;top:628.5px" width="15" height="15" viewBox="0 0 15 15"><defs><clipPath id="gc257_636"><circle cx="7.5" cy="7.5" r="7"/></clipPath></defs><circle cx="7.5" cy="7.5" r="7" fill="#3f9dd2"/><g clip-path="url(#gc257_636)" fill="none" stroke="#a8e4fa" stroke-width="1.1"><ellipse cx="7.5" cy="7.5" rx="2.94" ry="7"/><path d="M0 5.2 H15 M0 9.8 H15"/></g><circle cx="7.5" cy="7.5" r="6.6" fill="none" stroke="#3388bb" stroke-width="0.9"/></svg>
<svg style="left:249.5px;top:684.5px" width="15" height="15" viewBox="0 0 15 15"><defs><clipPath id="gc257_692"><circle cx="7.5" cy="7.5" r="7"/></clipPath></defs><circle cx="7.5" cy="7.5" r="7" fill="#3f9dd2"/><g clip-path="url(#gc257_692)" fill="none" stroke="#a8e4fa" stroke-width="1.1"><ellipse cx="7.5" cy="7.5" rx="2.94" ry="7"/><path d="M0 5.2 H15 M0 9.8 H15"/></g><circle cx="7.5" cy="7.5" r="6.6" fill="none" stroke="#3388bb" stroke-width="0.9"/></svg>
<svg style="left:249.5px;top:601px" width="16" height="15" viewBox="0 0 16 15"><defs><linearGradient id="cg" x1="0" y1="0" x2="0" y2="1"><stop offset="0" stop-color="#f59a4a"/><stop offset="1" stop-color="#e2641a"/></linearGradient></defs><rect x="0.5" y="0.5" width="14.6" height="13.6" rx="2.6" fill="url(#cg)" stroke="#e9aa78" stroke-width="0.8"/><path d="M4.2 10.6 L11.6 3.4 V10.6 Z" fill="#fff6ea"/></svg>
<div class="" style="left:250px;top:657px;width:16px;height:16px;background:#fff;"></div>
<span class="t" style="left:253.4px;top:656.6px;font-size:9.5px;font-weight:bold;color:#000;">M</span>
</div></body></html>
